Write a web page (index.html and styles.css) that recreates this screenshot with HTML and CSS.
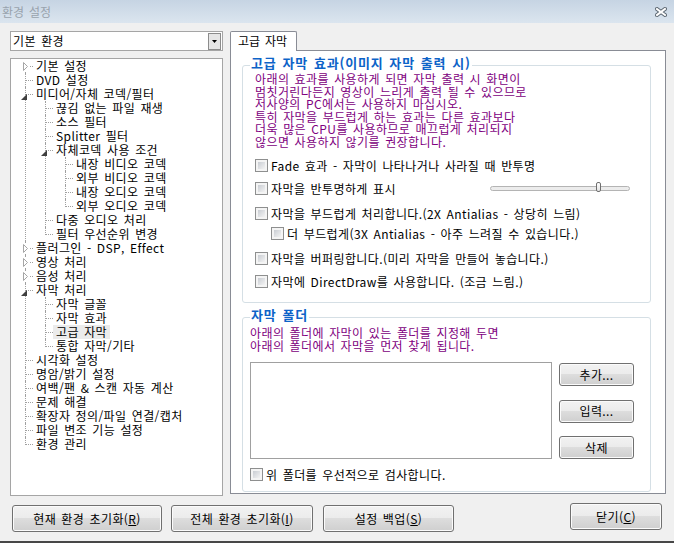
FILE: index.html
```html
<!DOCTYPE html>
<html lang="ko">
<head>
<meta charset="utf-8">
<title>환경 설정</title>
<link rel="stylesheet" href="styles.css">
</head>
<body>
<div class="window">
  <div class="titlebar">
    <span class="title">환경 설정</span>
    <svg class="close" width="12" height="10" viewBox="0 0 12 10">
      <path d="M2 2 L10 8 M10 2 L2 8" stroke="#5b6671" stroke-width="4" stroke-linecap="square" fill="none"/>
      <path d="M2 2 L10 8 M10 2 L2 8" stroke="#ffffff" stroke-width="2" stroke-linecap="square" fill="none"/>
    </svg>
  </div>
  <div class="client">
    <div class="main">
      <div class="left">
        <div class="combo">
          <span class="combo-text">기본 환경</span>
          <span class="combo-btn"><svg width="5" height="3" viewBox="0 0 5 3"><path d="M0 0H5L2.5 3Z" fill="#000"/></svg></span>
        </div>
        <div class="treebox">
          <ul class="tree">
            <li><span class="exp"><svg width="6" height="9" viewBox="0 0 6 9"><path d="M0.5 0.5 L4.5 4.5 L0.5 8.5 Z" fill="#fff" stroke="#a6a6a6"/></svg></span><span class="label">기본 설정</span></li>
            <li><span class="label">DVD 설정</span></li>
            <li><span class="exp open"><svg width="6" height="6" viewBox="0 0 6 6"><path d="M6 0 L6 6 L0 6 Z" fill="#3f3f3f"/></svg></span><span class="label">미디어/자체 코덱/필터</span>
              <ul>
                <li><span class="label">끊김 없는 파일 재생</span></li>
                <li><span class="label">소스 필터</span></li>
                <li><span class="label">Splitter 필터</span></li>
                <li><span class="exp open"><svg width="6" height="6" viewBox="0 0 6 6"><path d="M6 0 L6 6 L0 6 Z" fill="#3f3f3f"/></svg></span><span class="label">자체코덱 사용 조건</span>
                  <ul>
                    <li><span class="label">내장 비디오 코덱</span></li>
                    <li><span class="label">외부 비디오 코덱</span></li>
                    <li><span class="label">내장 오디오 코덱</span></li>
                    <li><span class="label">외부 오디오 코덱</span></li>
                  </ul>
                </li>
                <li><span class="label">다중 오디오 처리</span></li>
                <li><span class="label">필터 우선순위 변경</span></li>
              </ul>
            </li>
            <li><span class="exp"><svg width="6" height="9" viewBox="0 0 6 9"><path d="M0.5 0.5 L4.5 4.5 L0.5 8.5 Z" fill="#fff" stroke="#a6a6a6"/></svg></span><span class="label">플러그인 - DSP, Effect</span></li>
            <li><span class="exp"><svg width="6" height="9" viewBox="0 0 6 9"><path d="M0.5 0.5 L4.5 4.5 L0.5 8.5 Z" fill="#fff" stroke="#a6a6a6"/></svg></span><span class="label">영상 처리</span></li>
            <li><span class="exp"><svg width="6" height="9" viewBox="0 0 6 9"><path d="M0.5 0.5 L4.5 4.5 L0.5 8.5 Z" fill="#fff" stroke="#a6a6a6"/></svg></span><span class="label">음성 처리</span></li>
            <li><span class="exp open"><svg width="6" height="6" viewBox="0 0 6 6"><path d="M6 0 L6 6 L0 6 Z" fill="#3f3f3f"/></svg></span><span class="label">자막 처리</span>
              <ul>
                <li><span class="label">자막 글꼴</span></li>
                <li><span class="label">자막 효과</span></li>
                <li><span class="label selected">고급 자막</span></li>
                <li><span class="label">통합 자막/기타</span></li>
              </ul>
            </li>
            <li><span class="label">시각화 설정</span></li>
            <li><span class="label">명암/밝기 설정</span></li>
            <li><span class="label">여백/팬 &amp; 스캔 자동 계산</span></li>
            <li><span class="label">문제 해결</span></li>
            <li><span class="label">확장자 정의/파일 연결/캡처</span></li>
            <li><span class="label">파일 변조 기능 설정</span></li>
            <li><span class="label">환경 관리</span></li>
          </ul>
        </div>
      </div>
      <div class="right">
        <div class="tabs"><div class="tab">고급 자막</div></div>
        <div class="panel">
          <fieldset class="group g1">
            <legend>고급 자막 효과(이미지 자막 출력 시)</legend>
            <p class="note">아래의 효과를 사용하게 되면 자막 출력 시 화면이<br>멈칫거린다든지 영상이 느리게 출력 될 수 있으므로<br>저사양의 PC에서는 사용하지 마십시오.<br>특히 자막을 부드럽게 하는 효과는 다른 효과보다<br>더욱 많은 CPU를 사용하므로 매끄럽게 처리되지<br>않으면 사용하지 않기를 권장합니다.</p>
            <div class="check c-fade"><span class="box"></span><span>Fade 효과 - 자막이 나타나거나 사라질 때 반투명</span></div>
            <div class="check c-trans"><span class="box"></span><span>자막을 반투명하게 표시</span><span class="slider"><span class="thumb"></span></span></div>
            <div class="check c-smooth"><span class="box"></span><span>자막을 부드럽게 처리합니다.(2X Antialias - 상당히 느림)</span></div>
            <div class="check c-smoother"><span class="box"></span><span>더 부드럽게(3X Antialias - 아주 느려질 수 있습니다.)</span></div>
            <div class="check c-buffer"><span class="box"></span><span>자막을 버퍼링합니다.(미리 자막을 만들어 놓습니다.)</span></div>
            <div class="check c-dd"><span class="box"></span><span>자막에 DirectDraw를 사용합니다. (조금 느림.)</span></div>
          </fieldset>
          <fieldset class="group g2">
            <legend>자막 폴더</legend>
            <p class="note">아래의 폴더에 자막이 있는 폴더를 지정해 두면<br>아래의 폴더에서 자막을 먼저 찾게 됩니다.</p>
            <div class="folder-row">
              <div class="listbox"></div>
              <div class="side-btns">
                <button class="btn">추가...</button>
                <button class="btn">입력...</button>
                <button class="btn">삭제</button>
              </div>
            </div>
            <div class="check c-first"><span class="box"></span><span>위 폴더를 우선적으로 검사합니다.</span></div>
          </fieldset>
        </div>
      </div>
    </div>
    <div class="buttons">
      <button class="btn b-reset">현재 환경 초기화(<u>R</u>)</button>
      <button class="btn b-all">전체 환경 초기화(<u>I</u>)</button>
      <button class="btn b-backup">설정 백업(<u>S</u>)</button>
      <button class="btn b-close">닫기(<u>C</u>)</button>
    </div>
  </div>
</div>
</body>
</html>
```
FILE: styles.css
```css
* { box-sizing: border-box; }
html, body { margin: 0; padding: 0; }
body {
  width: 674px;
  height: 543px;
  overflow: hidden;
  font-family: "Noto Sans CJK KR", "Noto Sans", sans-serif;
  font-size: 12px;
  line-height: 14px;
  letter-spacing: 0.4px;
  word-spacing: 1.5px;
  color: #000;
  background: #f0f0f0;
}
.window {
  height: 543px;
  display: flex;
  flex-direction: column;
  border-bottom: 2px solid #474747;
}
.titlebar {
  flex: none;
  height: 23px;
  background: linear-gradient(#c6d4e3, #dbe5ef);
  display: flex;
  align-items: center;
  justify-content: space-between;
  padding: 0 7px 0 2px;
}
.title { color: #99a3ad; letter-spacing: 0; }
.close { display: block; margin-top: 1px; }
.client {
  flex: 1;
  display: flex;
  flex-direction: column;
  padding: 8px 8px 0 10px;
}
.main { display: flex; gap: 7px; }
.left { width: 213px; flex: none; }
.combo {
  height: 20px;
  border: 1px solid #a5a5a5;
  background: #fff;
  display: flex;
  align-items: center;
  justify-content: space-between;
  padding: 0 1px 0 2px;
}
.combo-btn {
  width: 13px;
  height: 17px;
  border: 1px solid #8c8c8c;
  background: #e6e6e6;
  display: flex;
  align-items: center;
  justify-content: center;
}
.combo-btn svg { display: block; }
.treebox {
  margin-top: 7px;
  height: 438px;
  border: 1px solid #a5a5a5;
  background: #fff;
}
.tree, .tree ul { list-style: none; margin: 0; padding: 0; }
.tree ul { margin-left: -2px; }
.tree li {
  position: relative;
  padding-left: 22px;
  line-height: 14px;
  white-space: nowrap;
}
.tree li::before {
  content: "";
  position: absolute;
  left: 14px;
  top: 0;
  bottom: 0;
  border-left: 1px dotted #a0a0a0;
}
.tree li:last-child::before { bottom: auto; height: 8px; }
.tree > li:first-child::before { top: 7px; }
.tree li::after {
  content: "";
  position: absolute;
  left: 15px;
  top: 7px;
  width: 7px;
  border-top: 1px dotted #a0a0a0;
}
.tree .exp {
  position: absolute;
  left: 12px;
  top: 3px;
  z-index: 1;
  background: #fff;
  line-height: 0;
}
.tree .exp.open { left: 10px; top: 7px; background: transparent; }
.tree .exp svg { display: block; }
.tree .label {
  display: inline-block;
  height: 14px;
  padding: 0 3px;
}
.tree .label.selected { background: #ebebeb; }

.right { width: 436px; flex: none; display: flex; flex-direction: column; }
.tabs { display: flex; height: 20px; margin-bottom: -1px; position: relative; z-index: 1; }
.tab {
  width: 67px;
  height: 20px;
  border: 1px solid #898c95;
  border-bottom: none;
  border-radius: 2px 2px 0 0;
  background: #fff;
  padding-left: 7px;
  line-height: 16px;
  padding-top: 1px;
  letter-spacing: 0;
}
.panel {
  height: 444px;
  border: 1px solid #898c95;
  background: #fff;
  padding: 4px 14px 0 11px;
}
.group {
  margin: 0;
  min-width: 0;
  border: 1px solid #d5dfe5;
  border-radius: 3px;
}
.group legend {
  font-size: 13px;
  font-weight: bold;
  line-height: 15px;
  letter-spacing: 0.8px;
  color: #0d63c8;
  padding: 0 1px 5px;
}
.g1 { padding: 0 12px 14px; }
.g1 legend { margin-left: -5px; }
.g2 { margin-top: 4px; padding: 0 7px 10px; }
.g2 legend { margin-left: 0; }
.note {
  margin: 0;
  color: #800080;
  line-height: 12.5px;
  white-space: nowrap;
}
.g1 .note { margin-top: -2px; }
.check {
  display: flex;
  align-items: center;
  height: 13px;
  line-height: 13px;
  white-space: nowrap;
}
.box {
  flex: none;
  width: 13px;
  height: 13px;
  margin-right: 3px;
  border: 1px solid #8e8f8f;
  padding: 2px;
  background: linear-gradient(135deg, #c9cdd3, #f3f3f3) content-box, #f4f4f4;
}
.c-fade { margin-top: 11px; }
.c-trans { margin-top: 10px; }
.c-smooth { margin-top: 12px; }
.c-smoother { margin-top: 7px; margin-left: 16px; }
.c-buffer { margin-top: 12px; }
.c-dd { margin-top: 10px; }
.slider {
  position: relative;
  margin-left: auto;
  margin-right: 8px;
  width: 140px;
  height: 5px;
  border: 1px solid #b4b4b4;
  border-radius: 3px;
  background: #ececec;
}
.thumb {
  position: absolute;
  left: 105px;
  top: -5px;
  width: 5px;
  height: 10px;
  border: 1px solid #6f6f6f;
  border-radius: 2px;
  background: linear-gradient(#ffffff, #e2e2e2);
}
.folder-row { display: flex; gap: 7px; margin-top: 10px; }
.listbox {
  width: 302px;
  height: 97px;
  border: 1px solid #a0a0a0;
  background: #fff;
}
.side-btns {
  width: 75px;
  height: 97px;
  padding-top: 1px;
  display: flex;
  flex-direction: column;
  justify-content: space-between;
}
.btn {
  font-family: inherit;
  font-size: 12px;
  letter-spacing: 0.4px;
  word-spacing: 1.5px;
  color: #000;
  border: 1px solid #707070;
  border-radius: 3px;
  background: linear-gradient(#f2f2f2, #ebebeb 50%, #dddddd 50%, #cfcfcf);
  box-shadow: inset 0 0 0 1px #fbfbfb;
  padding: 0;
  margin: 0;
  line-height: 14px;
}
.side-btns .btn { height: 23px; width: 75px; }
.c-first { margin-top: 9px; }
.buttons {
  display: flex;
  align-items: flex-start;
  margin-top: 9px;
  padding-left: 2px;
  padding-right: 4px;
}
.buttons .btn { height: 27px; }
.b-reset { width: 150px; }
.b-all { width: 142px; margin-left: 9px; }
.b-backup { width: 131px; margin-left: 10px; }
.b-close { width: 92px; margin-left: auto; margin-top: -2px; }
```
